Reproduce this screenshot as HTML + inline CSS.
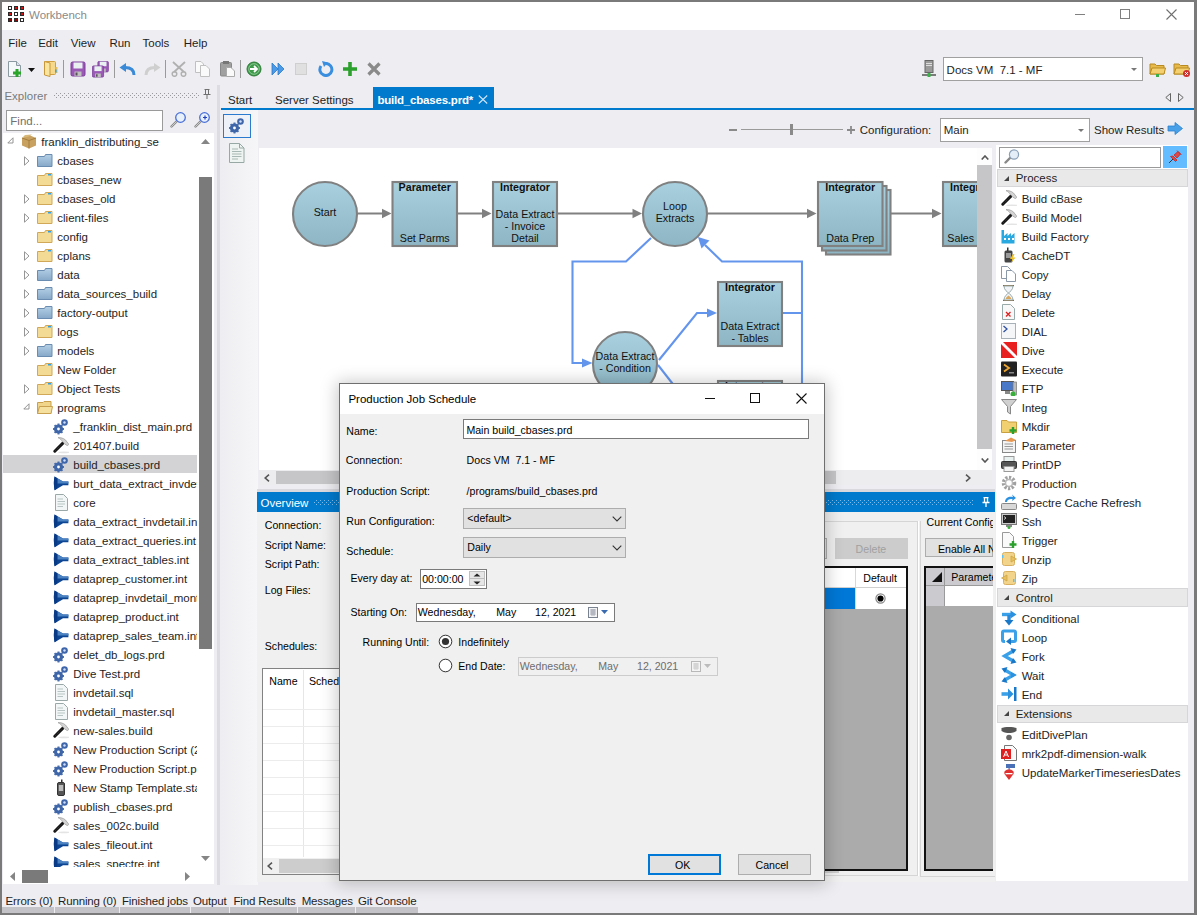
<!DOCTYPE html><html><head><meta charset="utf-8"><style>
html,body{margin:0;padding:0;}
body{width:1197px;height:915px;position:relative;overflow:hidden;background:#eeeef2;font-family:"Liberation Sans",sans-serif;}
.t{position:absolute;white-space:pre;}
.b{position:absolute;}
</style></head><body>
<div class="b" style="left:0px;top:0px;width:1197px;height:915px;background:#eeeef2"></div>
<div class="b" style="left:0px;top:0px;width:1197px;height:30px;background:#ffffff"></div>
<div class="b" style="left:8px;top:6px;width:4px;height:4px;background:#ffffff;box-sizing:border-box;border:1px solid #2a2a2a"></div>
<div class="b" style="left:14px;top:6px;width:4px;height:4px;background:#e01010;box-sizing:border-box;border:1px solid #2a2a2a"></div>
<div class="b" style="left:20px;top:6px;width:4px;height:4px;background:#e01010;box-sizing:border-box;border:1px solid #2a2a2a"></div>
<div class="b" style="left:8px;top:12px;width:4px;height:4px;background:#e01010;box-sizing:border-box;border:1px solid #2a2a2a"></div>
<div class="b" style="left:14px;top:12px;width:4px;height:4px;background:#ffffff;box-sizing:border-box;border:1px solid #2a2a2a"></div>
<div class="b" style="left:20px;top:12px;width:4px;height:4px;background:#e01010;box-sizing:border-box;border:1px solid #2a2a2a"></div>
<div class="b" style="left:8px;top:18px;width:4px;height:4px;background:#a00000;box-sizing:border-box;border:1px solid #2a2a2a"></div>
<div class="b" style="left:14px;top:18px;width:4px;height:4px;background:#a00000;box-sizing:border-box;border:1px solid #2a2a2a"></div>
<div class="b" style="left:20px;top:18px;width:4px;height:4px;background:#ffffff;box-sizing:border-box;border:1px solid #2a2a2a"></div>
<div class="t " style="left:29px;top:9.97px;font-size:11.5px;line-height:11.5px;color:#8a8a8a;font-weight:normal;">Workbench</div>
<div class="b" style="left:1075px;top:14px;width:10px;height:1px;background:#808080"></div>
<div class="b" style="left:1120px;top:9px;width:10px;height:10px;box-sizing:border-box;border:1px solid #808080"></div>
<svg class="b" style="left:1165.5px;top:9px;" width="11" height="11" viewBox="0 0 11 11"><path d="M0.5 0.5 L10.5 10.5 M10.5 0.5 L0.5 10.5" stroke="#707070" stroke-width="1.1"/></svg>
<div class="t " style="left:8.3px;top:38.17px;font-size:11.5px;line-height:11.5px;color:#1e1e1e;font-weight:normal;">File</div>
<div class="t " style="left:38.2px;top:38.17px;font-size:11.5px;line-height:11.5px;color:#1e1e1e;font-weight:normal;">Edit</div>
<div class="t " style="left:70.8px;top:38.17px;font-size:11.5px;line-height:11.5px;color:#1e1e1e;font-weight:normal;">View</div>
<div class="t " style="left:109.4px;top:38.17px;font-size:11.5px;line-height:11.5px;color:#1e1e1e;font-weight:normal;">Run</div>
<div class="t " style="left:142.5px;top:38.17px;font-size:11.5px;line-height:11.5px;color:#1e1e1e;font-weight:normal;">Tools</div>
<div class="t " style="left:183.8px;top:38.17px;font-size:11.5px;line-height:11.5px;color:#1e1e1e;font-weight:normal;">Help</div>
<svg class="b" style="left:7px;top:61px;" width="16" height="16" viewBox="0 0 16 16"><path d="M1.5 0.5 H9.5 L13.5 4.5 V15.5 H1.5 Z" fill="#f4f8f8" stroke="#8a9aa0"/><path d="M9.5 0.5 V4.5 H13.5" fill="#dde" stroke="#8a9aa0"/><path d="M10 8 V16 M6 12 H14" stroke="#2aa52a" stroke-width="3"/></svg>
<svg class="b" style="left:28px;top:68px;" width="7" height="4" viewBox="0 0 7 4"><path d="M0 0 H7 L3.5 4 Z" fill="#111"/></svg>
<svg class="b" style="left:43px;top:60px;" width="16" height="18" viewBox="0 0 16 18"><rect x="1.5" y="1.5" width="11" height="13" rx="1" fill="#f6d88c" stroke="#d0a040"/><path d="M1.5 1.5 L7 3 V16.5 L1.5 15Z" fill="#f9e4a0" stroke="#c89838"/><rect x="12.5" y="7" width="2" height="6" fill="#e8c060"/><rect x="12" y="9.5" width="1.6" height="3" fill="#30a8f0"/></svg>
<div class="b" style="left:63px;top:60px;width:1px;height:18px;background:#9a9a9a"></div>
<svg class="b" style="left:70px;top:61px;" width="16" height="16" viewBox="0 0 16 16"><g transform="translate(0.5,0.5) scale(1)"><rect x="0.5" y="0.5" width="14" height="14" rx="1.5" fill="#9b59b6" stroke="#7a3d9a"/><rect x="3" y="1" width="9" height="6" fill="#e8f0f0"/><rect x="4" y="10" width="7" height="4.5" fill="#c0c0c0"/><rect x="5" y="11" width="2" height="3" fill="#555"/></g></svg>
<svg class="b" style="left:92px;top:61px;" width="18" height="17" viewBox="0 0 18 17"><g transform="translate(5.5,0) scale(0.75)"><rect x="0.5" y="0.5" width="14" height="14" rx="1.5" fill="#9b59b6" stroke="#7a3d9a"/><rect x="3" y="1" width="9" height="6" fill="#e8f0f0"/><rect x="4" y="10" width="7" height="4.5" fill="#c0c0c0"/><rect x="5" y="11" width="2" height="3" fill="#555"/></g><g transform="translate(0,4.5) scale(0.8)"><rect x="0.5" y="0.5" width="14" height="14" rx="1.5" fill="#9b59b6" stroke="#7a3d9a"/><rect x="3" y="1" width="9" height="6" fill="#e8f0f0"/><rect x="4" y="10" width="7" height="4.5" fill="#c0c0c0"/><rect x="5" y="11" width="2" height="3" fill="#555"/></g></svg>
<div class="b" style="left:114px;top:60px;width:1px;height:18px;background:#9a9a9a"></div>
<svg class="b" style="left:119px;top:63px;" width="17" height="13" viewBox="0 0 17 13"><path d="M15 12 C15 6 11 4.5 6 4.5" fill="none" stroke="#3a8ad8" stroke-width="3"/><path d="M0.5 4.5 L7 0 V9 Z" fill="#3a8ad8"/></svg>
<svg class="b" style="left:144px;top:63px;" width="17" height="13" viewBox="0 0 17 13"><path d="M2 12 C2 6 6 4.5 11 4.5" fill="none" stroke="#cfcfcf" stroke-width="3"/><path d="M16.5 4.5 L10 0 V9 Z" fill="#cfcfcf"/></svg>
<div class="b" style="left:165px;top:60px;width:1px;height:18px;background:#9a9a9a"></div>
<svg class="b" style="left:171px;top:61px;" width="16" height="16" viewBox="0 0 16 16"><path d="M2 1 L13 11 M14 1 L3 11" stroke="#b0b0b0" stroke-width="1.8"/><circle cx="3.5" cy="13" r="2.3" fill="none" stroke="#b0b0b0" stroke-width="1.5"/><circle cx="12.5" cy="13" r="2.3" fill="none" stroke="#b0b0b0" stroke-width="1.5"/></svg>
<svg class="b" style="left:195px;top:61px;" width="16" height="16" viewBox="0 0 16 16"><path d="M0.5 0.5 H6 L8.5 3 V11.5 H0.5Z" fill="#fafafa" stroke="#c0c0c0"/><path d="M5.5 4.5 H11 L14.5 8 V15.5 H5.5Z" fill="#fafafa" stroke="#c0c0c0"/></svg>
<svg class="b" style="left:220px;top:61px;" width="16" height="16" viewBox="0 0 16 16"><rect x="0.5" y="1.5" width="11" height="13.5" rx="1" fill="#a0a0a0" stroke="#888"/><rect x="3" y="0" width="6" height="3" fill="#777"/><path d="M6.5 6.5 H11 L14.5 10 V15.5 H6.5Z" fill="#fafafa" stroke="#aaa"/></svg>
<div class="b" style="left:240px;top:60px;width:1px;height:18px;background:#9a9a9a"></div>
<svg class="b" style="left:246px;top:61px;" width="16" height="16" viewBox="0 0 16 16"><circle cx="8" cy="8" r="7" fill="#3d9b4a" stroke="#2d7a38"/><circle cx="8" cy="8" r="5.3" fill="none" stroke="#9fd0a5" stroke-width="0.8"/><path d="M4 8 H11 M8 5 L11 8 L8 11" fill="none" stroke="#fff" stroke-width="1.8"/></svg>
<svg class="b" style="left:271px;top:62px;" width="14" height="14" viewBox="0 0 14 14"><path d="M1 1 L7 7 L1 13 Z" fill="#4a9ae8" stroke="#2a78c8" stroke-width="0.8"/><path d="M7 1 L13 7 L7 13 Z" fill="#4a9ae8" stroke="#2a78c8" stroke-width="0.8"/></svg>
<svg class="b" style="left:295px;top:63px;" width="13" height="12" viewBox="0 0 13 12"><rect x="0.5" y="0.5" width="11" height="11" fill="#e0e0e0" stroke="#cfcfcf"/></svg>
<svg class="b" style="left:318px;top:61px;" width="16" height="16" viewBox="0 0 16 16"><path d="M8 2.5 A6 6 0 1 1 3 5" fill="none" stroke="#3a8ee0" stroke-width="3"/><path d="M4 0 L10 1.5 L6 6 Z" fill="#3a8ee0"/></svg>
<svg class="b" style="left:342px;top:61px;" width="16" height="16" viewBox="0 0 16 16"><path d="M8 1 V15 M1 8 H15" stroke="#2ca02c" stroke-width="3.6"/></svg>
<svg class="b" style="left:367px;top:62px;" width="14" height="14" viewBox="0 0 14 14"><path d="M1.5 1.5 L12.5 12.5 M12.5 1.5 L1.5 12.5" stroke="#8a8a8a" stroke-width="3.2"/></svg>
<svg class="b" style="left:921px;top:60px;" width="16" height="18" viewBox="0 0 16 18"><rect x="4" y="0.5" width="8" height="12" fill="#9a9a9a" stroke="#666"/><rect x="5" y="3" width="6" height="1" fill="#ddd"/><rect x="5" y="5" width="6" height="1" fill="#ddd"/><path d="M1 15 H15" stroke="#555" stroke-width="1.5"/><rect x="6.5" y="13" width="3" height="4" fill="#3ab04a"/></svg>
<div class="b" style="left:943px;top:57px;width:200px;height:24px;background:#fff;box-sizing:border-box;border:1px solid #a0a0a0"></div>
<div class="t " style="left:946.6px;top:64.77px;font-size:11.5px;line-height:11.5px;color:#1e1e1e;font-weight:normal;">Docs VM  7.1 - MF</div>
<svg class="b" style="left:1131px;top:68px;" width="6" height="3" viewBox="0 0 6 3"><path d="M0 0 H6 L3 3Z" fill="#777"/></svg>
<svg class="b" style="left:1149px;top:61px;" width="17" height="16" viewBox="0 0 17 16"><path d="M1 3 H6 L7.5 4.5 H15 V13 H1Z" fill="#e6b94a" stroke="#b88a20"/><path d="M1 13 L3 7 H16.5 L15 13Z" fill="#f5d070" stroke="#b88a20"/><rect x="7" y="13" width="3" height="3" fill="#3ab04a"/></svg>
<svg class="b" style="left:1173px;top:61px;" width="18" height="16" viewBox="0 0 18 16"><path d="M1 3 H6 L7.5 4.5 H15 V13 H1Z" fill="#e6b94a" stroke="#b88a20"/><path d="M1 13 L3 7 H16.5 L15 13Z" fill="#f5d070" stroke="#b88a20"/><circle cx="13.5" cy="12.5" r="3.5" fill="#d03030"/><path d="M12 11 L15 14 M15 11 L12 14" stroke="#fff" stroke-width="1"/></svg>
<div class="t " style="left:4.4px;top:90.97px;font-size:11.5px;line-height:11.5px;color:#7a7a7a;font-weight:normal;">Explorer</div>
<svg class="b" style="left:54px;top:93px;" width="146" height="5" viewBox="0 0 146 5"><defs><pattern id="pd1" x="0" y="0" width="4" height="4" patternUnits="userSpaceOnUse"><rect x="2" y="0" width="1" height="1" fill="#9a9a9e"/><rect x="0" y="2" width="1" height="1" fill="#9a9a9e"/></pattern></defs><rect x="0" y="0" width="146" height="5" fill="url(#pd1)"/></svg>
<svg class="b" style="left:203px;top:89px;" width="8" height="10" viewBox="0 0 8 10"><path d="M1.5 0.5 H6.5 M2.5 0.5 V5.5 H5.5 V0.5 M0.5 5.5 H7.5 M4 5.5 V10" fill="none" stroke="#707070"/></svg>
<div class="b" style="left:6px;top:110px;width:157px;height:21px;background:#fff;box-sizing:border-box;border:1px solid #9a9a9a"></div>
<div class="t " style="left:10.3px;top:115.67px;font-size:11.5px;line-height:11.5px;color:#707070;font-weight:normal;">Find...</div>
<svg class="b" style="left:170px;top:112px;" width="16" height="16" viewBox="0 0 16 16"><path d="M6.5 9.5 L1.5 14.5" stroke="#888" stroke-width="2.4" stroke-linecap="round"/><path d="M6.5 9.5 L1.5 14.5" stroke="#ddd" stroke-width="0.8" stroke-linecap="round"/><circle cx="10.5" cy="5.5" r="4.8" fill="#e8f0fa" stroke="#4a70d8" stroke-width="1.3"/></svg>
<svg class="b" style="left:194px;top:112px;" width="16" height="16" viewBox="0 0 16 16"><path d="M6.5 9.5 L1.5 14.5" stroke="#888" stroke-width="2.4" stroke-linecap="round"/><path d="M6.5 9.5 L1.5 14.5" stroke="#ddd" stroke-width="0.8" stroke-linecap="round"/><circle cx="10.5" cy="5.5" r="4.8" fill="#e8f0fa" stroke="#4a70d8" stroke-width="1.3"/><path d="M9 5.5 H13 M11 3.5 V7.5" stroke="#2040c0" stroke-width="1.2"/></svg>
<div class="b" style="left:3px;top:133px;width:211px;height:751px;background:#ffffff"></div>
<div class="b" style="left:214px;top:85px;width:3px;height:800px;background:#eeeef2"></div>
<div class="b" style="left:217px;top:85px;width:3px;height:800px;background:#dcdce2"></div>
<div class="b" style="left:3px;top:455px;width:194px;height:18px;background:#d3d3d6"></div>
<div class="b" style="left:0;top:0;width:1197px;height:915px;clip-path:inset(133px 1000px 48px 3px)">
<svg class="b" style="left:7px;top:136.5px;" width="7" height="7" viewBox="0 0 7 7"><path d="M6 0.8 V6 H0.8 Z" fill="none" stroke="#8a8a8a" stroke-width="0.9"/></svg>
<svg class="b" style="left:21px;top:133.5px;" width="16" height="15" viewBox="0 0 16 15"><path d="M1 4 L8 1 L15 4 V11.5 L8 14.5 L1 11.5Z" fill="#c8a060"/><path d="M1 4 L8 6.5 L15 4 M8 6.5 V14.5" fill="none" stroke="#a07838" stroke-width="0.9"/><path d="M1 4 L4 1 L11 0.5 L8 2.5" fill="#d8b878"/></svg>
<div class="t " style="left:41.3px;top:137.17px;font-size:11.5px;line-height:11.5px;color:#1e1e1e;font-weight:normal;">franklin_distributing_se</div>
<svg class="b" style="left:24px;top:155.5px;" width="6" height="10" viewBox="0 0 6 10"><path d="M0.5 0.8 L5 5 L0.5 9.2 Z" fill="none" stroke="#8a8a8a" stroke-width="0.9"/></svg>
<svg class="b" style="left:37px;top:153.5px;" width="16" height="14" viewBox="0 0 16 14"><defs><linearGradient id="gb" x1="0" y1="0" x2="0" y2="1"><stop offset="0" stop-color="#b4d0e6"/><stop offset="1" stop-color="#86a8c8"/></linearGradient></defs><path d="M0.5 2.5 H7.5 L8.5 0.5 H15 V12.5 H0.5Z" fill="url(#gb)" stroke="#6a8cb0"/></svg>
<div class="t " style="left:57.3px;top:156.17px;font-size:11.5px;line-height:11.5px;color:#1e1e1e;font-weight:normal;">cbases</div>
<svg class="b" style="left:37px;top:172.5px;" width="16" height="14" viewBox="0 0 16 14"><path d="M0.5 2.5 H7.5 L8.5 0.5 H15 V12.5 H0.5Z" fill="#f3da95" stroke="#d0a858"/><rect x="11" y="1" width="3" height="1.5" fill="#30a0e8"/></svg>
<div class="t " style="left:57.3px;top:175.17px;font-size:11.5px;line-height:11.5px;color:#1e1e1e;font-weight:normal;">cbases_new</div>
<svg class="b" style="left:24px;top:193.5px;" width="6" height="10" viewBox="0 0 6 10"><path d="M0.5 0.8 L5 5 L0.5 9.2 Z" fill="none" stroke="#8a8a8a" stroke-width="0.9"/></svg>
<svg class="b" style="left:37px;top:191.5px;" width="16" height="14" viewBox="0 0 16 14"><path d="M0.5 2.5 H7.5 L8.5 0.5 H15 V12.5 H0.5Z" fill="#f3da95" stroke="#d0a858"/><rect x="11" y="1" width="3" height="1.5" fill="#30a0e8"/></svg>
<div class="t " style="left:57.3px;top:194.17px;font-size:11.5px;line-height:11.5px;color:#1e1e1e;font-weight:normal;">cbases_old</div>
<svg class="b" style="left:24px;top:212.5px;" width="6" height="10" viewBox="0 0 6 10"><path d="M0.5 0.8 L5 5 L0.5 9.2 Z" fill="none" stroke="#8a8a8a" stroke-width="0.9"/></svg>
<svg class="b" style="left:37px;top:210.5px;" width="16" height="14" viewBox="0 0 16 14"><path d="M0.5 2.5 H7.5 L8.5 0.5 H15 V12.5 H0.5Z" fill="#f3da95" stroke="#d0a858"/><rect x="11" y="1" width="3" height="1.5" fill="#30a0e8"/></svg>
<div class="t " style="left:57.3px;top:213.17px;font-size:11.5px;line-height:11.5px;color:#1e1e1e;font-weight:normal;">client-files</div>
<svg class="b" style="left:37px;top:229.5px;" width="16" height="14" viewBox="0 0 16 14"><path d="M0.5 2.5 H7.5 L8.5 0.5 H15 V12.5 H0.5Z" fill="#f3da95" stroke="#d0a858"/><rect x="11" y="1" width="3" height="1.5" fill="#30a0e8"/></svg>
<div class="t " style="left:57.3px;top:232.17px;font-size:11.5px;line-height:11.5px;color:#1e1e1e;font-weight:normal;">config</div>
<svg class="b" style="left:24px;top:250.5px;" width="6" height="10" viewBox="0 0 6 10"><path d="M0.5 0.8 L5 5 L0.5 9.2 Z" fill="none" stroke="#8a8a8a" stroke-width="0.9"/></svg>
<svg class="b" style="left:37px;top:248.5px;" width="16" height="14" viewBox="0 0 16 14"><path d="M0.5 2.5 H7.5 L8.5 0.5 H15 V12.5 H0.5Z" fill="#f3da95" stroke="#d0a858"/><rect x="11" y="1" width="3" height="1.5" fill="#30a0e8"/></svg>
<div class="t " style="left:57.3px;top:251.17px;font-size:11.5px;line-height:11.5px;color:#1e1e1e;font-weight:normal;">cplans</div>
<svg class="b" style="left:24px;top:269.5px;" width="6" height="10" viewBox="0 0 6 10"><path d="M0.5 0.8 L5 5 L0.5 9.2 Z" fill="none" stroke="#8a8a8a" stroke-width="0.9"/></svg>
<svg class="b" style="left:37px;top:267.5px;" width="16" height="14" viewBox="0 0 16 14"><defs><linearGradient id="gb" x1="0" y1="0" x2="0" y2="1"><stop offset="0" stop-color="#b4d0e6"/><stop offset="1" stop-color="#86a8c8"/></linearGradient></defs><path d="M0.5 2.5 H7.5 L8.5 0.5 H15 V12.5 H0.5Z" fill="url(#gb)" stroke="#6a8cb0"/></svg>
<div class="t " style="left:57.3px;top:270.17px;font-size:11.5px;line-height:11.5px;color:#1e1e1e;font-weight:normal;">data</div>
<svg class="b" style="left:24px;top:288.5px;" width="6" height="10" viewBox="0 0 6 10"><path d="M0.5 0.8 L5 5 L0.5 9.2 Z" fill="none" stroke="#8a8a8a" stroke-width="0.9"/></svg>
<svg class="b" style="left:37px;top:286.5px;" width="16" height="14" viewBox="0 0 16 14"><defs><linearGradient id="gb" x1="0" y1="0" x2="0" y2="1"><stop offset="0" stop-color="#b4d0e6"/><stop offset="1" stop-color="#86a8c8"/></linearGradient></defs><path d="M0.5 2.5 H7.5 L8.5 0.5 H15 V12.5 H0.5Z" fill="url(#gb)" stroke="#6a8cb0"/></svg>
<div class="t " style="left:57.3px;top:289.17px;font-size:11.5px;line-height:11.5px;color:#1e1e1e;font-weight:normal;">data_sources_build</div>
<svg class="b" style="left:24px;top:307.5px;" width="6" height="10" viewBox="0 0 6 10"><path d="M0.5 0.8 L5 5 L0.5 9.2 Z" fill="none" stroke="#8a8a8a" stroke-width="0.9"/></svg>
<svg class="b" style="left:37px;top:305.5px;" width="16" height="14" viewBox="0 0 16 14"><defs><linearGradient id="gb" x1="0" y1="0" x2="0" y2="1"><stop offset="0" stop-color="#b4d0e6"/><stop offset="1" stop-color="#86a8c8"/></linearGradient></defs><path d="M0.5 2.5 H7.5 L8.5 0.5 H15 V12.5 H0.5Z" fill="url(#gb)" stroke="#6a8cb0"/></svg>
<div class="t " style="left:57.3px;top:308.17px;font-size:11.5px;line-height:11.5px;color:#1e1e1e;font-weight:normal;">factory-output</div>
<svg class="b" style="left:24px;top:326.5px;" width="6" height="10" viewBox="0 0 6 10"><path d="M0.5 0.8 L5 5 L0.5 9.2 Z" fill="none" stroke="#8a8a8a" stroke-width="0.9"/></svg>
<svg class="b" style="left:37px;top:324.5px;" width="16" height="14" viewBox="0 0 16 14"><path d="M0.5 2.5 H7.5 L8.5 0.5 H15 V12.5 H0.5Z" fill="#f3da95" stroke="#d0a858"/><rect x="11" y="1" width="3" height="1.5" fill="#30a0e8"/></svg>
<div class="t " style="left:57.3px;top:327.17px;font-size:11.5px;line-height:11.5px;color:#1e1e1e;font-weight:normal;">logs</div>
<svg class="b" style="left:24px;top:345.5px;" width="6" height="10" viewBox="0 0 6 10"><path d="M0.5 0.8 L5 5 L0.5 9.2 Z" fill="none" stroke="#8a8a8a" stroke-width="0.9"/></svg>
<svg class="b" style="left:37px;top:343.5px;" width="16" height="14" viewBox="0 0 16 14"><defs><linearGradient id="gb" x1="0" y1="0" x2="0" y2="1"><stop offset="0" stop-color="#b4d0e6"/><stop offset="1" stop-color="#86a8c8"/></linearGradient></defs><path d="M0.5 2.5 H7.5 L8.5 0.5 H15 V12.5 H0.5Z" fill="url(#gb)" stroke="#6a8cb0"/></svg>
<div class="t " style="left:57.3px;top:346.17px;font-size:11.5px;line-height:11.5px;color:#1e1e1e;font-weight:normal;">models</div>
<svg class="b" style="left:37px;top:362.5px;" width="16" height="14" viewBox="0 0 16 14"><path d="M0.5 2.5 H7.5 L8.5 0.5 H15 V12.5 H0.5Z" fill="#f3da95" stroke="#d0a858"/><rect x="11" y="1" width="3" height="1.5" fill="#30a0e8"/></svg>
<div class="t " style="left:57.3px;top:365.17px;font-size:11.5px;line-height:11.5px;color:#1e1e1e;font-weight:normal;">New Folder</div>
<svg class="b" style="left:24px;top:383.5px;" width="6" height="10" viewBox="0 0 6 10"><path d="M0.5 0.8 L5 5 L0.5 9.2 Z" fill="none" stroke="#8a8a8a" stroke-width="0.9"/></svg>
<svg class="b" style="left:37px;top:381.5px;" width="16" height="14" viewBox="0 0 16 14"><path d="M0.5 2.5 H7.5 L8.5 0.5 H15 V12.5 H0.5Z" fill="#f3da95" stroke="#d0a858"/><rect x="11" y="1" width="3" height="1.5" fill="#30a0e8"/></svg>
<div class="t " style="left:57.3px;top:384.17px;font-size:11.5px;line-height:11.5px;color:#1e1e1e;font-weight:normal;">Object Tests</div>
<svg class="b" style="left:23px;top:402.5px;" width="7" height="7" viewBox="0 0 7 7"><path d="M6 0.8 V6 H0.8 Z" fill="none" stroke="#8a8a8a" stroke-width="0.9"/></svg>
<svg class="b" style="left:37px;top:400.5px;" width="16" height="14" viewBox="0 0 16 14"><path d="M0.5 1.5 H6 L7 0.5 H14 V12.5 H0.5Z" fill="#f0d58a" stroke="#c8a050"/><path d="M0.5 12.5 L2.5 5.5 H15.5 L14 12.5Z" fill="#f6e0a0" stroke="#c8a050"/></svg>
<div class="t " style="left:57.3px;top:403.17px;font-size:11.5px;line-height:11.5px;color:#1e1e1e;font-weight:normal;">programs</div>
<svg class="b" style="left:53px;top:417.5px;" width="16" height="17" viewBox="0 0 16 17"><g fill="#3f66a8"><circle cx="5.5" cy="11" r="4.6"/><circle cx="11.5" cy="4.5" r="3.3"/></g><g fill="#5d82c0" opacity="0.9"><path d="M5.5 5.5 V16.5 M0 11 H11 M1.6 7.1 L9.4 14.9 M9.4 7.1 L1.6 14.9" stroke="#3f66a8" stroke-width="2"/></g><circle cx="5.5" cy="11" r="1.4" fill="#fff"/><circle cx="11.5" cy="4.5" r="1.2" fill="#cfe0ff"/></svg>
<div class="t " style="left:73.3px;top:422.17px;font-size:11.5px;line-height:11.5px;color:#1e1e1e;font-weight:normal;">_franklin_dist_main.prd</div>
<svg class="b" style="left:53px;top:436.5px;" width="16" height="17" viewBox="0 0 16 17"><ellipse cx="11" cy="15.3" rx="6" ry="0.9" fill="#e4e4e4"/><path d="M5 0.6 C9 0.4 12.5 2 14 5 L15.3 6.6 C16.2 7.6 14.6 9.2 13.6 8.2 L11.2 6.6 L9.8 8 L8 6.5 L9.6 5 C8.6 3 7 1.5 5 0.6Z" fill="#d4d4d4" stroke="#9a9a9a" stroke-width="0.7"/><path d="M1.8 14.2 L9.4 6.6" stroke="#151515" stroke-width="2.9" stroke-linecap="round"/><path d="M2.5 13.5 L8.5 7.5" stroke="#666" stroke-width="0.6" stroke-dasharray="0.8 1.2"/></svg>
<div class="t " style="left:73.3px;top:441.17px;font-size:11.5px;line-height:11.5px;color:#1e1e1e;font-weight:normal;">201407.build</div>
<svg class="b" style="left:53px;top:455.5px;" width="16" height="17" viewBox="0 0 16 17"><g fill="#3f66a8"><circle cx="5.5" cy="11" r="4.6"/><circle cx="11.5" cy="4.5" r="3.3"/></g><g fill="#5d82c0" opacity="0.9"><path d="M5.5 5.5 V16.5 M0 11 H11 M1.6 7.1 L9.4 14.9 M9.4 7.1 L1.6 14.9" stroke="#3f66a8" stroke-width="2"/></g><circle cx="5.5" cy="11" r="1.4" fill="#fff"/><circle cx="11.5" cy="4.5" r="1.2" fill="#cfe0ff"/></svg>
<div class="t " style="left:73.3px;top:460.17px;font-size:11.5px;line-height:11.5px;color:#1e1e1e;font-weight:normal;">build_cbases.prd</div>
<svg class="b" style="left:53px;top:475.5px;" width="16" height="15" viewBox="0 0 16 15"><path d="M1.6 0.6 C0.6 4 0.6 10 1.6 14.2 L10 9.2 H15.4 V5.4 H10 Z" fill="#0d4595"/><path d="M4.5 2.6 L10 5.4 H15.4 V7.6 H4.5Z" fill="#4a82c2"/><path d="M1.6 0.6 C0.6 4 0.6 10 1.6 14.2 L4.2 12.6 V2.2Z" fill="#083a85"/></svg>
<div class="t " style="left:73.3px;top:479.17px;font-size:11.5px;line-height:11.5px;color:#1e1e1e;font-weight:normal;">burt_data_extract_invdetail.int</div>
<svg class="b" style="left:55px;top:493.5px;" width="13" height="17" viewBox="0 0 13 17"><path d="M0.5 0.5 H8.5 L12.5 4.5 V16.5 H0.5Z" fill="#f2f6f6" stroke="#9aa8a8"/><path d="M2.5 5 H8 M2.5 7.5 H10 M2.5 10 H10 M2.5 12.5 H8" stroke="#b8c4c4" stroke-width="1"/></svg>
<div class="t " style="left:73.3px;top:498.17px;font-size:11.5px;line-height:11.5px;color:#1e1e1e;font-weight:normal;">core</div>
<svg class="b" style="left:53px;top:513.5px;" width="16" height="15" viewBox="0 0 16 15"><path d="M1.6 0.6 C0.6 4 0.6 10 1.6 14.2 L10 9.2 H15.4 V5.4 H10 Z" fill="#0d4595"/><path d="M4.5 2.6 L10 5.4 H15.4 V7.6 H4.5Z" fill="#4a82c2"/><path d="M1.6 0.6 C0.6 4 0.6 10 1.6 14.2 L4.2 12.6 V2.2Z" fill="#083a85"/></svg>
<div class="t " style="left:73.3px;top:517.17px;font-size:11.5px;line-height:11.5px;color:#1e1e1e;font-weight:normal;">data_extract_invdetail.int</div>
<svg class="b" style="left:53px;top:532.5px;" width="16" height="15" viewBox="0 0 16 15"><path d="M1.6 0.6 C0.6 4 0.6 10 1.6 14.2 L10 9.2 H15.4 V5.4 H10 Z" fill="#0d4595"/><path d="M4.5 2.6 L10 5.4 H15.4 V7.6 H4.5Z" fill="#4a82c2"/><path d="M1.6 0.6 C0.6 4 0.6 10 1.6 14.2 L4.2 12.6 V2.2Z" fill="#083a85"/></svg>
<div class="t " style="left:73.3px;top:536.17px;font-size:11.5px;line-height:11.5px;color:#1e1e1e;font-weight:normal;">data_extract_queries.int</div>
<svg class="b" style="left:53px;top:551.5px;" width="16" height="15" viewBox="0 0 16 15"><path d="M1.6 0.6 C0.6 4 0.6 10 1.6 14.2 L10 9.2 H15.4 V5.4 H10 Z" fill="#0d4595"/><path d="M4.5 2.6 L10 5.4 H15.4 V7.6 H4.5Z" fill="#4a82c2"/><path d="M1.6 0.6 C0.6 4 0.6 10 1.6 14.2 L4.2 12.6 V2.2Z" fill="#083a85"/></svg>
<div class="t " style="left:73.3px;top:555.17px;font-size:11.5px;line-height:11.5px;color:#1e1e1e;font-weight:normal;">data_extract_tables.int</div>
<svg class="b" style="left:53px;top:570.5px;" width="16" height="15" viewBox="0 0 16 15"><path d="M1.6 0.6 C0.6 4 0.6 10 1.6 14.2 L10 9.2 H15.4 V5.4 H10 Z" fill="#0d4595"/><path d="M4.5 2.6 L10 5.4 H15.4 V7.6 H4.5Z" fill="#4a82c2"/><path d="M1.6 0.6 C0.6 4 0.6 10 1.6 14.2 L4.2 12.6 V2.2Z" fill="#083a85"/></svg>
<div class="t " style="left:73.3px;top:574.17px;font-size:11.5px;line-height:11.5px;color:#1e1e1e;font-weight:normal;">dataprep_customer.int</div>
<svg class="b" style="left:53px;top:589.5px;" width="16" height="15" viewBox="0 0 16 15"><path d="M1.6 0.6 C0.6 4 0.6 10 1.6 14.2 L10 9.2 H15.4 V5.4 H10 Z" fill="#0d4595"/><path d="M4.5 2.6 L10 5.4 H15.4 V7.6 H4.5Z" fill="#4a82c2"/><path d="M1.6 0.6 C0.6 4 0.6 10 1.6 14.2 L4.2 12.6 V2.2Z" fill="#083a85"/></svg>
<div class="t " style="left:73.3px;top:593.17px;font-size:11.5px;line-height:11.5px;color:#1e1e1e;font-weight:normal;">dataprep_invdetail_month.int</div>
<svg class="b" style="left:53px;top:608.5px;" width="16" height="15" viewBox="0 0 16 15"><path d="M1.6 0.6 C0.6 4 0.6 10 1.6 14.2 L10 9.2 H15.4 V5.4 H10 Z" fill="#0d4595"/><path d="M4.5 2.6 L10 5.4 H15.4 V7.6 H4.5Z" fill="#4a82c2"/><path d="M1.6 0.6 C0.6 4 0.6 10 1.6 14.2 L4.2 12.6 V2.2Z" fill="#083a85"/></svg>
<div class="t " style="left:73.3px;top:612.17px;font-size:11.5px;line-height:11.5px;color:#1e1e1e;font-weight:normal;">dataprep_product.int</div>
<svg class="b" style="left:53px;top:627.5px;" width="16" height="15" viewBox="0 0 16 15"><path d="M1.6 0.6 C0.6 4 0.6 10 1.6 14.2 L10 9.2 H15.4 V5.4 H10 Z" fill="#0d4595"/><path d="M4.5 2.6 L10 5.4 H15.4 V7.6 H4.5Z" fill="#4a82c2"/><path d="M1.6 0.6 C0.6 4 0.6 10 1.6 14.2 L4.2 12.6 V2.2Z" fill="#083a85"/></svg>
<div class="t " style="left:73.3px;top:631.17px;font-size:11.5px;line-height:11.5px;color:#1e1e1e;font-weight:normal;">dataprep_sales_team.int</div>
<svg class="b" style="left:53px;top:645.5px;" width="16" height="17" viewBox="0 0 16 17"><g fill="#3f66a8"><circle cx="5.5" cy="11" r="4.6"/><circle cx="11.5" cy="4.5" r="3.3"/></g><g fill="#5d82c0" opacity="0.9"><path d="M5.5 5.5 V16.5 M0 11 H11 M1.6 7.1 L9.4 14.9 M9.4 7.1 L1.6 14.9" stroke="#3f66a8" stroke-width="2"/></g><circle cx="5.5" cy="11" r="1.4" fill="#fff"/><circle cx="11.5" cy="4.5" r="1.2" fill="#cfe0ff"/></svg>
<div class="t " style="left:73.3px;top:650.17px;font-size:11.5px;line-height:11.5px;color:#1e1e1e;font-weight:normal;">delet_db_logs.prd</div>
<svg class="b" style="left:53px;top:664.5px;" width="16" height="17" viewBox="0 0 16 17"><g fill="#3f66a8"><circle cx="5.5" cy="11" r="4.6"/><circle cx="11.5" cy="4.5" r="3.3"/></g><g fill="#5d82c0" opacity="0.9"><path d="M5.5 5.5 V16.5 M0 11 H11 M1.6 7.1 L9.4 14.9 M9.4 7.1 L1.6 14.9" stroke="#3f66a8" stroke-width="2"/></g><circle cx="5.5" cy="11" r="1.4" fill="#fff"/><circle cx="11.5" cy="4.5" r="1.2" fill="#cfe0ff"/></svg>
<div class="t " style="left:73.3px;top:669.17px;font-size:11.5px;line-height:11.5px;color:#1e1e1e;font-weight:normal;">Dive Test.prd</div>
<svg class="b" style="left:55px;top:683.5px;" width="13" height="17" viewBox="0 0 13 17"><path d="M0.5 0.5 H8.5 L12.5 4.5 V16.5 H0.5Z" fill="#f2f6f6" stroke="#9aa8a8"/><path d="M2.5 5 H8 M2.5 7.5 H10 M2.5 10 H10 M2.5 12.5 H8" stroke="#b8c4c4" stroke-width="1"/></svg>
<div class="t " style="left:73.3px;top:688.17px;font-size:11.5px;line-height:11.5px;color:#1e1e1e;font-weight:normal;">invdetail.sql</div>
<svg class="b" style="left:55px;top:702.5px;" width="13" height="17" viewBox="0 0 13 17"><path d="M0.5 0.5 H8.5 L12.5 4.5 V16.5 H0.5Z" fill="#f2f6f6" stroke="#9aa8a8"/><path d="M2.5 5 H8 M2.5 7.5 H10 M2.5 10 H10 M2.5 12.5 H8" stroke="#b8c4c4" stroke-width="1"/></svg>
<div class="t " style="left:73.3px;top:707.17px;font-size:11.5px;line-height:11.5px;color:#1e1e1e;font-weight:normal;">invdetail_master.sql</div>
<svg class="b" style="left:53px;top:721.5px;" width="16" height="17" viewBox="0 0 16 17"><ellipse cx="11" cy="15.3" rx="6" ry="0.9" fill="#e4e4e4"/><path d="M5 0.6 C9 0.4 12.5 2 14 5 L15.3 6.6 C16.2 7.6 14.6 9.2 13.6 8.2 L11.2 6.6 L9.8 8 L8 6.5 L9.6 5 C8.6 3 7 1.5 5 0.6Z" fill="#d4d4d4" stroke="#9a9a9a" stroke-width="0.7"/><path d="M1.8 14.2 L9.4 6.6" stroke="#151515" stroke-width="2.9" stroke-linecap="round"/><path d="M2.5 13.5 L8.5 7.5" stroke="#666" stroke-width="0.6" stroke-dasharray="0.8 1.2"/></svg>
<div class="t " style="left:73.3px;top:726.17px;font-size:11.5px;line-height:11.5px;color:#1e1e1e;font-weight:normal;">new-sales.build</div>
<svg class="b" style="left:53px;top:740.5px;" width="16" height="17" viewBox="0 0 16 17"><g fill="#3f66a8"><circle cx="5.5" cy="11" r="4.6"/><circle cx="11.5" cy="4.5" r="3.3"/></g><g fill="#5d82c0" opacity="0.9"><path d="M5.5 5.5 V16.5 M0 11 H11 M1.6 7.1 L9.4 14.9 M9.4 7.1 L1.6 14.9" stroke="#3f66a8" stroke-width="2"/></g><circle cx="5.5" cy="11" r="1.4" fill="#fff"/><circle cx="11.5" cy="4.5" r="1.2" fill="#cfe0ff"/></svg>
<div class="t " style="left:73.3px;top:745.17px;font-size:11.5px;line-height:11.5px;color:#1e1e1e;font-weight:normal;">New Production Script (2).prd</div>
<svg class="b" style="left:53px;top:759.5px;" width="16" height="17" viewBox="0 0 16 17"><g fill="#3f66a8"><circle cx="5.5" cy="11" r="4.6"/><circle cx="11.5" cy="4.5" r="3.3"/></g><g fill="#5d82c0" opacity="0.9"><path d="M5.5 5.5 V16.5 M0 11 H11 M1.6 7.1 L9.4 14.9 M9.4 7.1 L1.6 14.9" stroke="#3f66a8" stroke-width="2"/></g><circle cx="5.5" cy="11" r="1.4" fill="#fff"/><circle cx="11.5" cy="4.5" r="1.2" fill="#cfe0ff"/></svg>
<div class="t " style="left:73.3px;top:764.17px;font-size:11.5px;line-height:11.5px;color:#1e1e1e;font-weight:normal;">New Production Script.prd</div>
<svg class="b" style="left:55px;top:778.5px;" width="12" height="18" viewBox="0 0 12 18"><rect x="2.5" y="3.5" width="7" height="13" rx="1.5" fill="#555" stroke="#333"/><rect x="3.8" y="6" width="4.4" height="6" fill="#bbb"/><rect x="6" y="0.5" width="1.5" height="3.5" fill="#333"/></svg>
<div class="t " style="left:73.3px;top:783.17px;font-size:11.5px;line-height:11.5px;color:#1e1e1e;font-weight:normal;">New Stamp Template.stamp</div>
<svg class="b" style="left:53px;top:797.5px;" width="16" height="17" viewBox="0 0 16 17"><g fill="#3f66a8"><circle cx="5.5" cy="11" r="4.6"/><circle cx="11.5" cy="4.5" r="3.3"/></g><g fill="#5d82c0" opacity="0.9"><path d="M5.5 5.5 V16.5 M0 11 H11 M1.6 7.1 L9.4 14.9 M9.4 7.1 L1.6 14.9" stroke="#3f66a8" stroke-width="2"/></g><circle cx="5.5" cy="11" r="1.4" fill="#fff"/><circle cx="11.5" cy="4.5" r="1.2" fill="#cfe0ff"/></svg>
<div class="t " style="left:73.3px;top:802.17px;font-size:11.5px;line-height:11.5px;color:#1e1e1e;font-weight:normal;">publish_cbases.prd</div>
<svg class="b" style="left:53px;top:816.5px;" width="16" height="17" viewBox="0 0 16 17"><ellipse cx="11" cy="15.3" rx="6" ry="0.9" fill="#e4e4e4"/><path d="M5 0.6 C9 0.4 12.5 2 14 5 L15.3 6.6 C16.2 7.6 14.6 9.2 13.6 8.2 L11.2 6.6 L9.8 8 L8 6.5 L9.6 5 C8.6 3 7 1.5 5 0.6Z" fill="#d4d4d4" stroke="#9a9a9a" stroke-width="0.7"/><path d="M1.8 14.2 L9.4 6.6" stroke="#151515" stroke-width="2.9" stroke-linecap="round"/><path d="M2.5 13.5 L8.5 7.5" stroke="#666" stroke-width="0.6" stroke-dasharray="0.8 1.2"/></svg>
<div class="t " style="left:73.3px;top:821.17px;font-size:11.5px;line-height:11.5px;color:#1e1e1e;font-weight:normal;">sales_002c.build</div>
<svg class="b" style="left:53px;top:836.5px;" width="16" height="15" viewBox="0 0 16 15"><path d="M1.6 0.6 C0.6 4 0.6 10 1.6 14.2 L10 9.2 H15.4 V5.4 H10 Z" fill="#0d4595"/><path d="M4.5 2.6 L10 5.4 H15.4 V7.6 H4.5Z" fill="#4a82c2"/><path d="M1.6 0.6 C0.6 4 0.6 10 1.6 14.2 L4.2 12.6 V2.2Z" fill="#083a85"/></svg>
<div class="t " style="left:73.3px;top:840.17px;font-size:11.5px;line-height:11.5px;color:#1e1e1e;font-weight:normal;">sales_fileout.int</div>
<svg class="b" style="left:53px;top:855.5px;" width="16" height="15" viewBox="0 0 16 15"><path d="M1.6 0.6 C0.6 4 0.6 10 1.6 14.2 L10 9.2 H15.4 V5.4 H10 Z" fill="#0d4595"/><path d="M4.5 2.6 L10 5.4 H15.4 V7.6 H4.5Z" fill="#4a82c2"/><path d="M1.6 0.6 C0.6 4 0.6 10 1.6 14.2 L4.2 12.6 V2.2Z" fill="#083a85"/></svg>
<div class="t " style="left:73.3px;top:859.17px;font-size:11.5px;line-height:11.5px;color:#1e1e1e;font-weight:normal;">sales_spectre.int</div>
</div>
<div class="b" style="left:199px;top:133px;width:15px;height:734px;background:#ffffff"></div>
<svg class="b" style="left:201px;top:139px;" width="9" height="5" viewBox="0 0 9 5"><path d="M0 5 L4.5 0 L9 5Z" fill="#858585"/></svg>
<div class="b" style="left:199px;top:177px;width:13px;height:472px;background:#7a7a7a"></div>
<svg class="b" style="left:201px;top:856px;" width="9" height="5" viewBox="0 0 9 5"><path d="M0 0 L4.5 5 L9 0Z" fill="#858585"/></svg>
<div class="b" style="left:3px;top:867px;width:211px;height:17px;background:#ffffff"></div>
<svg class="b" style="left:10px;top:872px;" width="5" height="9" viewBox="0 0 5 9"><path d="M5 0 L0 4.5 L5 9Z" fill="#858585"/></svg>
<div class="b" style="left:22px;top:870px;width:26px;height:13px;background:#7a7a7a"></div>
<svg class="b" style="left:185px;top:872px;" width="5" height="9" viewBox="0 0 5 9"><path d="M0 0 L5 4.5 L0 9Z" fill="#858585"/></svg>
<div class="t " style="left:228px;top:95.27px;font-size:11.5px;line-height:11.5px;color:#1e1e1e;font-weight:normal;">Start</div>
<div class="t " style="left:275px;top:95.27px;font-size:11.5px;line-height:11.5px;color:#1e1e1e;font-weight:normal;">Server Settings</div>
<div class="b" style="left:373px;top:87px;width:121px;height:21px;background:#007acc"></div>
<div class="t " style="left:377.4px;top:95.27px;font-size:11.5px;line-height:11.5px;color:#ffffff;font-weight:bold;letter-spacing:-0.2px">build_cbases.prd*</div>
<svg class="b" style="left:478px;top:95px;" width="10" height="9" viewBox="0 0 10 9"><path d="M0.8 0.5 L9.2 8.5 M9.2 0.5 L0.8 8.5" stroke="#d0e4f6" stroke-width="1.1"/></svg>
<div class="b" style="left:221px;top:108px;width:976px;height:2px;background:#007acc"></div>
<svg class="b" style="left:1165px;top:93px;" width="6" height="9" viewBox="0 0 6 9"><path d="M5.5 0.5 L0.8 4.5 L5.5 8.5Z" fill="none" stroke="#555" stroke-width="0.9"/></svg>
<svg class="b" style="left:1178px;top:93px;" width="6" height="9" viewBox="0 0 6 9"><path d="M0.5 0.5 L5.2 4.5 L0.5 8.5Z" fill="none" stroke="#555" stroke-width="0.9"/></svg>
<div class="b" style="left:221px;top:110px;width:776px;height:775px;background:#eeeef2"></div>
<div class="b" style="left:221px;top:110px;width:37px;height:775px;background:linear-gradient(to right,#eeeef2,#f6f6f8)"></div>
<div class="b" style="left:223px;top:114px;width:28px;height:24px;box-sizing:border-box;border:1.5px solid #2a7ad0;background:#eef2f8"></div>
<svg class="b" style="left:229px;top:117px;" width="16" height="17" viewBox="0 0 16 17"><g fill="#3f66a8"><circle cx="5.5" cy="11" r="4.6"/><circle cx="11.5" cy="4.5" r="3.3"/></g><g fill="#5d82c0" opacity="0.9"><path d="M5.5 5.5 V16.5 M0 11 H11 M1.6 7.1 L9.4 14.9 M9.4 7.1 L1.6 14.9" stroke="#3f66a8" stroke-width="2"/></g><circle cx="5.5" cy="11" r="1.4" fill="#fff"/><circle cx="11.5" cy="4.5" r="1.2" fill="#cfe0ff"/></svg>
<svg class="b" style="left:229px;top:143px;" width="16" height="20" viewBox="0 0 16 20"><path d="M0.5 0.5 H10.5 L15 5 V19.5 H0.5Z" fill="#eef4f2" stroke="#98a8a4"/><path d="M10.5 0.5 V5 H15" fill="none" stroke="#98a8a4"/><path d="M3 6 H9 M3 8.5 H12.5 M3 11 H12.5 M3 13.5 H12.5 M3 16 H9" stroke="#a8b8b4" stroke-width="1"/></svg>
<div class="b" style="left:729px;top:129px;width:8px;height:2px;background:#8a8a8a"></div>
<div class="b" style="left:741px;top:129px;width:102px;height:1px;background:#9a9a9a"></div>
<div class="b" style="left:790px;top:124px;width:3px;height:11px;background:#8a8a8a"></div>
<svg class="b" style="left:847px;top:126px;" width="8" height="8" viewBox="0 0 8 8"><path d="M4 0 V8 M0 4 H8" stroke="#8a8a8a" stroke-width="1.8"/></svg>
<div class="t " style="left:859.7px;top:125.37px;font-size:11.5px;line-height:11.5px;color:#1e1e1e;font-weight:normal;">Configuration:</div>
<div class="b" style="left:940px;top:118px;width:150px;height:24px;background:#fff;box-sizing:border-box;border:1px solid #a0a0a0"></div>
<div class="t " style="left:943.7px;top:125.37px;font-size:11.5px;line-height:11.5px;color:#1e1e1e;font-weight:normal;">Main</div>
<svg class="b" style="left:1078px;top:129px;" width="6" height="3" viewBox="0 0 6 3"><path d="M0 0 H6 L3 3Z" fill="#777"/></svg>
<div class="t " style="left:1094px;top:125.37px;font-size:11.5px;line-height:11.5px;color:#1e1e1e;font-weight:normal;">Show Results</div>
<svg class="b" style="left:1167px;top:122px;" width="16" height="13" viewBox="0 0 16 13"><path d="M1 4 H8 V0.5 L15.5 6.5 L8 12.5 V9 H1Z" fill="#48a0e8" stroke="#2a80d0" stroke-width="0.8"/></svg>
<div class="b" style="left:259px;top:148px;width:718px;height:322px;background:#ffffff"></div>
<svg class="b" style="left:259px;top:148px" width="718" height="322" viewBox="259 148 718 322" font-family="Liberation Sans, sans-serif"><defs><linearGradient id="ng" x1="0" y1="0" x2="0" y2="1"><stop offset="0" stop-color="#a8d0de"/><stop offset="1" stop-color="#8db5c4"/></linearGradient></defs><path d="M358 213.5 H383.5" stroke="#808080" stroke-width="2"/><path d="M382.0 208.7 L391.5 213.5 L382.0 218.3Z" fill="#808080"/><path d="M458 213.5 H483.5" stroke="#808080" stroke-width="2"/><path d="M482.0 208.7 L491.5 213.5 L482.0 218.3Z" fill="#808080"/><path d="M558 213.5 H634" stroke="#808080" stroke-width="2"/><path d="M632.5 208.7 L642 213.5 L632.5 218.3Z" fill="#808080"/><path d="M708 213.5 H808.5" stroke="#808080" stroke-width="2"/><path d="M807.0 208.7 L816.5 213.5 L807.0 218.3Z" fill="#808080"/><path d="M891 213.5 H933.5" stroke="#808080" stroke-width="2"/><path d="M932.0 208.7 L941.5 213.5 L932.0 218.3Z" fill="#808080"/><path d="M651 238 L626 261.5 H572.5 V363 H583" fill="none" stroke="#6495ed" stroke-width="2.1"/><path d="M582 358.5 L592.5 363 L582 367.5Z" fill="#6495ed"/><path d="M783 313 H802 M802 480 V261.5 H722 L705 245" fill="none" stroke="#6495ed" stroke-width="2.1"/><path d="M698 237 L709.5 240.5 L701.5 248.5Z" fill="#6495ed"/><path d="M659 360 L697 313 H708" fill="none" stroke="#6495ed" stroke-width="2.1"/><path d="M707 308.5 L717 313 L707 317.5Z" fill="#6495ed"/><path d="M658 365 L690 406" fill="none" stroke="#6495ed" stroke-width="2.1"/><circle cx="675" cy="214" r="32" fill="url(#ng)" stroke="#808080" stroke-width="2.1"/><text x="675" y="210.2" text-anchor="middle" font-size="10.7" fill="#111">Loop</text><text x="675" y="221.8" text-anchor="middle" font-size="10.7" fill="#111">Extracts</text><circle cx="325" cy="214" r="32" fill="url(#ng)" stroke="#808080" stroke-width="2.1"/><text x="325" y="216.2" text-anchor="middle" font-size="10.7" fill="#111">Start</text><rect x="392.5" y="182" width="64.5" height="64" fill="url(#ng)" stroke="#808080" stroke-width="2.1"/><text x="424.75" y="191" text-anchor="middle" font-size="10.7" font-weight="bold" fill="#111">Parameter</text><text x="424.75" y="241.8" text-anchor="middle" font-size="10.7" fill="#111">Set Parms</text><rect x="493" y="182" width="64" height="64" fill="url(#ng)" stroke="#808080" stroke-width="2.1"/><text x="525.0" y="191" text-anchor="middle" font-size="10.7" font-weight="bold" fill="#111">Integrator</text><text x="525.0" y="217.9" text-anchor="middle" font-size="10.7" fill="#111">Data Extract</text><text x="525.0" y="229.7" text-anchor="middle" font-size="10.7" fill="#111">- Invoice</text><text x="525.0" y="241.5" text-anchor="middle" font-size="10.7" fill="#111">Detail</text><rect x="826" y="190" width="64.5" height="64.5" fill="url(#ng)" stroke="#808080" stroke-width="2.1"/><text x="858.25" y="199" text-anchor="middle" font-size="10.7" font-weight="bold" fill="#111"></text><rect x="822" y="186" width="64.5" height="64.5" fill="url(#ng)" stroke="#808080" stroke-width="2.1"/><text x="854.25" y="195" text-anchor="middle" font-size="10.7" font-weight="bold" fill="#111"></text><rect x="818" y="182" width="64.5" height="64" fill="url(#ng)" stroke="#808080" stroke-width="2.1"/><text x="850.25" y="191" text-anchor="middle" font-size="10.7" font-weight="bold" fill="#111">Integrator</text><text x="850.25" y="242" text-anchor="middle" font-size="10.7" fill="#111">Data Prep</text><rect x="943" y="182" width="64" height="64" fill="url(#ng)" stroke="#808080" stroke-width="2.1"/><text x="975.0" y="191" text-anchor="middle" font-size="10.7" font-weight="bold" fill="#111">Integrator</text><text x="975.0" y="242" text-anchor="middle" font-size="10.7" fill="#111">Sales Cube</text><rect x="718" y="282" width="64" height="64" fill="url(#ng)" stroke="#808080" stroke-width="2.1"/><text x="750.0" y="291" text-anchor="middle" font-size="10.7" font-weight="bold" fill="#111">Integrator</text><text x="750.0" y="329.7" text-anchor="middle" font-size="10.7" fill="#111">Data Extract</text><text x="750.0" y="341.5" text-anchor="middle" font-size="10.7" fill="#111">- Tables</text><circle cx="625" cy="364" r="32" fill="url(#ng)" stroke="#808080" stroke-width="2.1"/><text x="625" y="360" text-anchor="middle" font-size="10.7" fill="#111">Data Extract</text><text x="625" y="371.6" text-anchor="middle" font-size="10.7" fill="#111">- Condition</text><rect x="718" y="381" width="64" height="64" fill="url(#ng)" stroke="#808080" stroke-width="2.1"/><text x="750.0" y="390" text-anchor="middle" font-size="10.7" font-weight="bold" fill="#111">Integrator</text></svg>
<div class="b" style="left:977px;top:148px;width:15px;height:322px;background:#fdfdfd"></div>
<svg class="b" style="left:981px;top:155px;" width="8" height="5" viewBox="0 0 8 5"><path d="M0.7 4.5 L4 1 L7.3 4.5" fill="none" stroke="#555" stroke-width="1.6"/></svg>
<div class="b" style="left:977px;top:165px;width:15px;height:284px;background:#c6c6c8"></div>
<svg class="b" style="left:981px;top:458px;" width="8" height="5" viewBox="0 0 8 5"><path d="M0.7 0.5 L4 4 L7.3 0.5" fill="none" stroke="#555" stroke-width="1.6"/></svg>
<div class="b" style="left:259px;top:470px;width:733px;height:15px;background:#ededf0"></div>
<svg class="b" style="left:264px;top:474px;" width="6" height="8" viewBox="0 0 6 8"><path d="M5 0.7 L1.2 4 L5 7.3" fill="none" stroke="#555" stroke-width="1.6"/></svg>
<div class="b" style="left:276px;top:471px;width:560px;height:13px;background:#c6c6c8"></div>
<svg class="b" style="left:965px;top:474px;" width="6" height="8" viewBox="0 0 6 8"><path d="M1 0.7 L4.8 4 L1 7.3" fill="none" stroke="#555" stroke-width="1.6"/></svg>
<div class="b" style="left:257px;top:489px;width:738px;height:3px;background:#dadade"></div>
<div class="b" style="left:257px;top:492px;width:738px;height:20px;background:#007acc"></div>
<div class="t " style="left:260.5px;top:497.97px;font-size:11.5px;line-height:11.5px;color:#ffffff;font-weight:normal;">Overview</div>
<svg class="b" style="left:314px;top:500px;" width="660" height="5" viewBox="0 0 660 5"><defs><pattern id="pd2" x="0" y="0" width="4" height="4" patternUnits="userSpaceOnUse"><rect x="2" y="0" width="1" height="1" fill="#7fbbe8"/><rect x="0" y="2" width="1" height="1" fill="#7fbbe8"/></pattern></defs><rect x="0" y="0" width="660" height="5" fill="url(#pd2)"/></svg>
<svg class="b" style="left:982px;top:497px;" width="8" height="10" viewBox="0 0 8 10"><path d="M1.5 0.5 H6.5 M2.5 0.5 V5.5 H5.5 V0.5 M0.5 5.5 H7.5 M4 5.5 V10" fill="none" stroke="#fff" stroke-width="1.3"/></svg>
<div class="b" style="left:257px;top:512px;width:738px;height:370px;background:#f0f0f0"></div>
<div class="t " style="left:264.8px;top:519.53px;font-size:10.6px;line-height:10.6px;color:#000;font-weight:normal;">Connection:</div>
<div class="t " style="left:264.8px;top:539.73px;font-size:10.6px;line-height:10.6px;color:#000;font-weight:normal;">Script Name:</div>
<div class="t " style="left:264.8px;top:559.43px;font-size:10.6px;line-height:10.6px;color:#000;font-weight:normal;">Script Path:</div>
<div class="t " style="left:264.8px;top:584.53px;font-size:10.6px;line-height:10.6px;color:#000;font-weight:normal;">Log Files:</div>
<div class="t " style="left:264.8px;top:641.43px;font-size:10.6px;line-height:10.6px;color:#000;font-weight:normal;">Schedules:</div>
<div class="b" style="left:262px;top:668px;width:520px;height:207px;background:#fff;box-sizing:border-box;border:1px solid #828282"></div>
<div class="b" style="left:303px;top:670px;width:1px;height:187px;background:#e6e6e6"></div>
<div class="b" style="left:263px;top:709px;width:518px;height:1px;background:#ececec"></div>
<div class="b" style="left:263px;top:726px;width:518px;height:1px;background:#ececec"></div>
<div class="b" style="left:263px;top:743px;width:518px;height:1px;background:#ececec"></div>
<div class="b" style="left:263px;top:760px;width:518px;height:1px;background:#ececec"></div>
<div class="b" style="left:263px;top:777px;width:518px;height:1px;background:#ececec"></div>
<div class="b" style="left:263px;top:794px;width:518px;height:1px;background:#ececec"></div>
<div class="b" style="left:263px;top:811px;width:518px;height:1px;background:#ececec"></div>
<div class="b" style="left:263px;top:828px;width:518px;height:1px;background:#ececec"></div>
<div class="b" style="left:263px;top:845px;width:518px;height:1px;background:#ececec"></div>
<div class="t " style="left:269.3px;top:676.03px;font-size:10.6px;line-height:10.6px;color:#000;font-weight:normal;">Name</div>
<div class="t " style="left:309px;top:676.03px;font-size:10.6px;line-height:10.6px;color:#000;font-weight:normal;">Schedule</div>
<div class="b" style="left:263px;top:858px;width:518px;height:16px;background:#f0f0f0"></div>
<svg class="b" style="left:267px;top:862px;" width="6" height="8" viewBox="0 0 6 8"><path d="M5 0.7 L1.2 4 L5 7.3" fill="none" stroke="#555" stroke-width="1.6"/></svg>
<div class="b" style="left:279px;top:859px;width:560px;height:14px;background:#cdcdcd"></div>
<div class="b" style="left:700px;top:521px;width:218px;height:1px;background:#d5d5d5"></div>
<div class="b" style="left:917px;top:521px;width:1px;height:355px;background:#d5d5d5"></div>
<div class="b" style="left:918px;top:521px;width:1px;height:355px;background:#fff"></div>
<div class="b" style="left:700px;top:875px;width:218px;height:1px;background:#d5d5d5"></div>
<div class="b" style="left:920px;top:521px;width:75px;height:1px;background:#d5d5d5"></div>
<div class="b" style="left:920px;top:521px;width:1px;height:355px;background:#d5d5d5"></div>
<div class="b" style="left:920px;top:876px;width:75px;height:1px;background:#d5d5d5"></div>
<div class="b" style="left:921px;top:516px;width:74px;height:14px;background:#f0f0f0"></div>
<div class="b" style="left:0;top:0;width:1197px;height:915px;clip-path:inset(510px 204px 385px 921px)">
<div class="t " style="left:926.6px;top:516.73px;font-size:10.6px;line-height:10.6px;color:#000;font-weight:normal;">Current Configuration</div>
</div>
<div class="b" style="left:760px;top:538px;width:67px;height:21px;background:#e1e1e1;box-sizing:border-box;border:1px solid #adadad"></div>
<div class="b" style="left:835px;top:538px;width:73px;height:21px;background:#cccccc"></div>
<div class="t " style="left:855.6px;top:543.83px;font-size:10.6px;line-height:10.6px;color:#a0a0a0;font-weight:normal;">Delete</div>
<div class="b" style="left:925px;top:538px;width:68px;height:19px;background:#e1e1e1;box-sizing:border-box;border:1px solid #adadad"></div>
<div class="b" style="left:0;top:0;width:1197px;height:915px;clip-path:inset(530px 204px 355px 926px)">
<div class="t " style="left:938px;top:543.53px;font-size:10.6px;line-height:10.6px;color:#000;font-weight:normal;">Enable All Nodes</div>
</div>
<div class="b" style="left:700px;top:566px;width:208px;height:305px;background:#ababab;box-sizing:border-box;border:2px solid #111;border-left:none"></div>
<div class="b" style="left:700px;top:568px;width:206px;height:19px;background:#fff"></div>
<div class="b" style="left:855px;top:568px;width:1px;height:41px;background:#d8d8d8"></div>
<div class="b" style="left:700px;top:587px;width:206px;height:1px;background:#d0d0d0"></div>
<div class="t " style="left:863.3px;top:572.63px;font-size:10.6px;line-height:10.6px;color:#000;font-weight:normal;">Default</div>
<div class="b" style="left:700px;top:588px;width:155px;height:21px;background:#0078d7"></div>
<div class="b" style="left:856px;top:588px;width:50px;height:21px;background:#fff"></div>
<svg class="b" style="left:875px;top:593px;" width="11" height="11" viewBox="0 0 11 11"><circle cx="5.5" cy="5.5" r="4.6" fill="#fff" stroke="#888" stroke-width="1.2"/><circle cx="5.5" cy="5.5" r="3.1" fill="#000"/></svg>
<div class="b" style="left:924px;top:566px;width:69px;height:305px;background:#ababab;box-sizing:border-box;border:2px solid #111;border-right:none"></div>
<div class="b" style="left:926px;top:568px;width:67px;height:17px;background:#cbcbcf"></div>
<div class="b" style="left:926px;top:585px;width:67px;height:1px;background:#9a9a9a"></div>
<div class="b" style="left:926px;top:586px;width:18px;height:20px;background:#cbcbcf"></div>
<div class="b" style="left:944px;top:568px;width:1px;height:38px;background:#9a9a9a"></div>
<div class="b" style="left:945px;top:586px;width:48px;height:20px;background:#fff"></div>
<svg class="b" style="left:932px;top:572px;" width="10" height="10" viewBox="0 0 10 10"><path d="M10 0 V10 H0Z" fill="#111"/></svg>
<div class="b" style="left:0;top:0;width:1197px;height:915px;clip-path:inset(560px 204px 315px 926px)">
<div class="t " style="left:951.3px;top:571.63px;font-size:10.6px;line-height:10.6px;color:#000;font-weight:normal;">Parameter</div>
</div>
<div class="b" style="left:996px;top:145px;width:192px;height:736px;background:#ffffff"></div>
<div class="b" style="left:1188px;top:145px;width:6px;height:736px;background:#eeeef2"></div>
<div class="b" style="left:999px;top:147px;width:162px;height:21px;background:#fff;box-sizing:border-box;border:1px solid #9a9a9a"></div>
<svg class="b" style="left:1004px;top:149px;" width="16" height="15" viewBox="0 0 16 15"><path d="M6 9 L1.5 13.5" stroke="#888" stroke-width="2.4" stroke-linecap="round"/><circle cx="10" cy="5.5" r="4.6" fill="#e4eef8" stroke="#8aa0b8" stroke-width="1.2"/></svg>
<div class="b" style="left:1163px;top:146px;width:24px;height:22px;background:#63bcff"></div>
<svg class="b" style="left:1167px;top:149px;" width="16" height="16" viewBox="0 0 16 16"><path d="M2 14 L7 9" stroke="#333" stroke-width="1"/><path d="M6 7 L10 11 L8.5 12.5 L3.5 7.5Z M7 6 L11 2.5 L13.5 5 L10 9Z M10 1.5 L14.5 6 " fill="#e04848" stroke="#c02828" stroke-width="0.8"/></svg>
<div class="b" style="left:997px;top:169px;width:191px;height:18px;background:#e9e9ea;box-sizing:border-box;border:1px solid #d6d6d8"></div>
<svg class="b" style="left:1003.5px;top:175.5px;" width="5" height="5" viewBox="0 0 5 5"><path d="M5 0 V5 H0Z" fill="#444"/></svg>
<div class="t " style="left:1015.7px;top:173.07px;font-size:11.5px;line-height:11.5px;color:#1e1e1e;font-weight:normal;">Process</div>
<div class="b" style="left:997px;top:588px;width:191px;height:19px;background:#e9e9ea;box-sizing:border-box;border:1px solid #d6d6d8"></div>
<svg class="b" style="left:1003.5px;top:595.0px;" width="5" height="5" viewBox="0 0 5 5"><path d="M5 0 V5 H0Z" fill="#444"/></svg>
<div class="t " style="left:1015.7px;top:593.07px;font-size:11.5px;line-height:11.5px;color:#1e1e1e;font-weight:normal;">Control</div>
<div class="b" style="left:997px;top:704.5px;width:191px;height:18.0px;background:#e9e9ea;box-sizing:border-box;border:1px solid #d6d6d8"></div>
<svg class="b" style="left:1003.5px;top:711.0px;" width="5" height="5" viewBox="0 0 5 5"><path d="M5 0 V5 H0Z" fill="#444"/></svg>
<div class="t " style="left:1015.7px;top:708.57px;font-size:11.5px;line-height:11.5px;color:#1e1e1e;font-weight:normal;">Extensions</div>
<svg class="b" style="left:1001px;top:190.0px;" width="16" height="16" viewBox="0 0 16 16"><ellipse cx="11" cy="15.3" rx="6" ry="0.9" fill="#e4e4e4"/><path d="M5 0.6 C9 0.4 12.5 2 14 5 L15.3 6.6 C16.2 7.6 14.6 9.2 13.6 8.2 L11.2 6.6 L9.8 8 L8 6.5 L9.6 5 C8.6 3 7 1.5 5 0.6Z" fill="#d4d4d4" stroke="#9a9a9a" stroke-width="0.7"/><path d="M1.8 14.2 L9.4 6.6" stroke="#151515" stroke-width="2.9" stroke-linecap="round"/><path d="M2.5 13.5 L8.5 7.5" stroke="#666" stroke-width="0.6" stroke-dasharray="0.8 1.2"/></svg>
<div class="t " style="left:1021.7px;top:193.77px;font-size:11.5px;line-height:11.5px;color:#1e1e1e;font-weight:normal;">Build cBase</div>
<svg class="b" style="left:1001px;top:209.0px;" width="16" height="16" viewBox="0 0 16 16"><ellipse cx="11" cy="15.3" rx="6" ry="0.9" fill="#e4e4e4"/><path d="M5 0.6 C9 0.4 12.5 2 14 5 L15.3 6.6 C16.2 7.6 14.6 9.2 13.6 8.2 L11.2 6.6 L9.8 8 L8 6.5 L9.6 5 C8.6 3 7 1.5 5 0.6Z" fill="#d4d4d4" stroke="#9a9a9a" stroke-width="0.7"/><path d="M1.8 14.2 L9.4 6.6" stroke="#151515" stroke-width="2.9" stroke-linecap="round"/><path d="M2.5 13.5 L8.5 7.5" stroke="#666" stroke-width="0.6" stroke-dasharray="0.8 1.2"/></svg>
<div class="t " style="left:1021.7px;top:212.77px;font-size:11.5px;line-height:11.5px;color:#1e1e1e;font-weight:normal;">Build Model</div>
<svg class="b" style="left:1001px;top:228.0px;" width="16" height="16" viewBox="0 0 16 16"><path d="M0.5 15.5 V2 H3 V8 L6.5 5 V8 L10 5 V8 L13.5 5 V15.5Z" fill="#2aa8e0"/><rect x="3" y="10" width="2" height="2" fill="#fff"/><rect x="7" y="10" width="2" height="2" fill="#fff"/><rect x="11" y="10" width="2" height="2" fill="#fff"/></svg>
<div class="t " style="left:1021.7px;top:231.77px;font-size:11.5px;line-height:11.5px;color:#1e1e1e;font-weight:normal;">Build Factory</div>
<svg class="b" style="left:1001px;top:247.0px;" width="16" height="16" viewBox="0 0 16 16"><rect x="3.5" y="3.5" width="8" height="12" rx="1.5" fill="#444"/><rect x="5" y="6" width="5" height="5" fill="#999"/><rect x="6" y="0.5" width="1.5" height="3.5" fill="#333"/><path d="M12 7 L9 12 H11.5 L10 16 L14.5 10.5 H12 L13.5 7Z" fill="#f0c020"/></svg>
<div class="t " style="left:1021.7px;top:250.77px;font-size:11.5px;line-height:11.5px;color:#1e1e1e;font-weight:normal;">CacheDT</div>
<svg class="b" style="left:1001px;top:266.0px;" width="16" height="16" viewBox="0 0 16 16"><path d="M0.5 0.5 H6.5 L9.5 3.5 V12.5 H0.5Z" fill="#fff" stroke="#8a98a8"/><path d="M5.5 4.5 H11 L14.5 8 V15.5 H5.5Z" fill="#fff" stroke="#8a98a8"/></svg>
<div class="t " style="left:1021.7px;top:269.77px;font-size:11.5px;line-height:11.5px;color:#1e1e1e;font-weight:normal;">Copy</div>
<svg class="b" style="left:1001px;top:285.0px;" width="16" height="16" viewBox="0 0 16 16"><path d="M2 0.5 H13 M2 15.5 H13" stroke="#8a6a40" stroke-width="1.4"/><path d="M3 1 H12 C12 5 8.5 7 7.5 8 C8.5 9 12 11 12 15 H3 C3 11 6.5 9 7.5 8 C6.5 7 3 5 3 1Z" fill="#f0f4f8" stroke="#9aa"/><path d="M4.5 14 C5 12 7 11 7.5 10.5 C8 11 10 12 10.5 14Z" fill="#d8a860"/></svg>
<div class="t " style="left:1021.7px;top:288.77px;font-size:11.5px;line-height:11.5px;color:#1e1e1e;font-weight:normal;">Delay</div>
<svg class="b" style="left:1001px;top:304.0px;" width="16" height="16" viewBox="0 0 16 16"><path d="M1.5 0.5 H9.5 L13.5 4.5 V15.5 H1.5Z" fill="#f8f8f8" stroke="#9aa"/><path d="M5 8 L9.5 12.5 M9.5 8 L5 12.5" stroke="#e02020" stroke-width="1.3"/></svg>
<div class="t " style="left:1021.7px;top:307.77px;font-size:11.5px;line-height:11.5px;color:#1e1e1e;font-weight:normal;">Delete</div>
<svg class="b" style="left:1001px;top:323.0px;" width="16" height="16" viewBox="0 0 16 16"><rect x="0.5" y="0.5" width="14" height="15" fill="#f4f6f8" stroke="#a8b0b8"/><path d="M2.5 3 L6 6 L2.5 9" fill="none" stroke="#3050a0" stroke-width="1.3"/></svg>
<div class="t " style="left:1021.7px;top:326.77px;font-size:11.5px;line-height:11.5px;color:#1e1e1e;font-weight:normal;">DIAL</div>
<svg class="b" style="left:1001px;top:342.0px;" width="16" height="16" viewBox="0 0 16 16"><rect x="0" y="0" width="16" height="16" fill="#e82020"/><path d="M0 2 L14 16 H16 V14 L2 0 H0Z" fill="#fff"/></svg>
<div class="t " style="left:1021.7px;top:345.77px;font-size:11.5px;line-height:11.5px;color:#1e1e1e;font-weight:normal;">Dive</div>
<svg class="b" style="left:1001px;top:361.0px;" width="16" height="16" viewBox="0 0 16 16"><rect x="0" y="0.5" width="16" height="15" rx="1" fill="#222"/><path d="M3 3.5 L8 7 L3 10.5" fill="none" stroke="#f0a830" stroke-width="1.8"/><rect x="8" y="11" width="5" height="1.5" fill="#888"/></svg>
<div class="t " style="left:1021.7px;top:364.77px;font-size:11.5px;line-height:11.5px;color:#1e1e1e;font-weight:normal;">Execute</div>
<svg class="b" style="left:1001px;top:380.0px;" width="16" height="16" viewBox="0 0 16 16"><rect x="0.5" y="1.5" width="12" height="9" fill="#4a78c8" stroke="#555"/><rect x="4" y="11" width="5" height="3" fill="#888"/><rect x="12" y="2" width="3.5" height="13" fill="#bbb" stroke="#777" stroke-width="0.7"/><circle cx="12" cy="14" r="2.5" fill="#3ab03a"/></svg>
<div class="t " style="left:1021.7px;top:383.77px;font-size:11.5px;line-height:11.5px;color:#1e1e1e;font-weight:normal;">FTP</div>
<svg class="b" style="left:1001px;top:399.0px;" width="16" height="16" viewBox="0 0 16 16"><path d="M0.5 0.5 H15.5 L9.5 7.5 V15 L6.5 13 V7.5Z" fill="#d0d0d0" stroke="#888"/></svg>
<div class="t " style="left:1021.7px;top:402.77px;font-size:11.5px;line-height:11.5px;color:#1e1e1e;font-weight:normal;">Integ</div>
<svg class="b" style="left:1001px;top:418.0px;" width="16" height="16" viewBox="0 0 16 16"><path d="M0.5 2.5 H6 L7.5 4 H15.5 V14.5 H0.5Z" fill="#f0d070" stroke="#c8a040"/><path d="M12 9 V16 M8.5 12.5 H15.5" stroke="#2ca02c" stroke-width="2.4"/></svg>
<div class="t " style="left:1021.7px;top:421.77px;font-size:11.5px;line-height:11.5px;color:#1e1e1e;font-weight:normal;">Mkdir</div>
<svg class="b" style="left:1001px;top:437.0px;" width="16" height="16" viewBox="0 0 16 16"><rect x="1.5" y="3.5" width="13" height="12" fill="#f4f4f4" stroke="#888"/><path d="M3.5 7 H12 M3.5 9.5 H12 M3.5 12 H12" stroke="#999"/><path d="M4 4 L10 0.5 L15 3 L11 5Z" fill="#e89850"/></svg>
<div class="t " style="left:1021.7px;top:440.77px;font-size:11.5px;line-height:11.5px;color:#1e1e1e;font-weight:normal;">Parameter</div>
<svg class="b" style="left:1001px;top:456.0px;" width="16" height="16" viewBox="0 0 16 16"><rect x="3" y="0.5" width="10" height="6" fill="#e8f0f0" stroke="#999"/><rect x="0.5" y="5.5" width="15" height="7" rx="1" fill="#555" stroke="#333"/><rect x="3" y="10.5" width="10" height="5" fill="#f4f4f4" stroke="#999"/></svg>
<div class="t " style="left:1021.7px;top:459.77px;font-size:11.5px;line-height:11.5px;color:#1e1e1e;font-weight:normal;">PrintDP</div>
<svg class="b" style="left:1001px;top:475.0px;" width="16" height="16" viewBox="0 0 16 16"><circle cx="8" cy="8" r="5.5" fill="none" stroke="#a0a0a0" stroke-width="3.5" stroke-dasharray="2.2 1.4"/><circle cx="8" cy="8" r="3.5" fill="none" stroke="#b8b8b8" stroke-width="1.5"/></svg>
<div class="t " style="left:1021.7px;top:478.77px;font-size:11.5px;line-height:11.5px;color:#1e1e1e;font-weight:normal;">Production</div>
<svg class="b" style="left:1001px;top:494.0px;" width="16" height="16" viewBox="0 0 16 16"><rect x="0.5" y="9.5" width="15" height="6" rx="1" fill="#d8d8d8" stroke="#888"/><path d="M4 8 C4 3 9 2 12 3 L11 0.5 L15 4 L11 7 L11.5 5 C9 4.5 6 5.5 6 8Z" fill="#2a90e0"/></svg>
<div class="t " style="left:1021.7px;top:497.77px;font-size:11.5px;line-height:11.5px;color:#1e1e1e;font-weight:normal;">Spectre Cache Refresh</div>
<svg class="b" style="left:1001px;top:513.0px;" width="16" height="16" viewBox="0 0 16 16"><rect x="0.5" y="0.5" width="15" height="11" fill="#ccc" stroke="#777"/><rect x="2" y="2" width="12" height="8" fill="#222"/><path d="M3 3.5 L5 5 L3 6.5" stroke="#eee" fill="none" stroke-width="0.8"/><rect x="5" y="12" width="6" height="2" fill="#888"/><circle cx="8" cy="14.5" r="1.5" fill="#3ab03a"/></svg>
<div class="t " style="left:1021.7px;top:516.77px;font-size:11.5px;line-height:11.5px;color:#1e1e1e;font-weight:normal;">Ssh</div>
<svg class="b" style="left:1001px;top:532.0px;" width="16" height="16" viewBox="0 0 16 16"><path d="M1.5 0.5 H8.5 L12.5 4.5 V15.5 H1.5Z" fill="#fafafa" stroke="#999"/><path d="M12 9 V16 M8.5 12.5 H15.5" stroke="#2ca02c" stroke-width="2.4"/></svg>
<div class="t " style="left:1021.7px;top:535.77px;font-size:11.5px;line-height:11.5px;color:#1e1e1e;font-weight:normal;">Trigger</div>
<svg class="b" style="left:1001px;top:551.0px;" width="16" height="16" viewBox="0 0 16 16"><rect x="1.5" y="1.5" width="12" height="13" rx="2" fill="#f2d48a" stroke="#d8b060"/><path d="M10 5 L15.5 8 L10 11Z" fill="#e8c060" stroke="#c8a040" stroke-width="0.7"/><rect x="1" y="4" width="1.5" height="3" fill="#60c0f0"/></svg>
<div class="t " style="left:1021.7px;top:554.77px;font-size:11.5px;line-height:11.5px;color:#1e1e1e;font-weight:normal;">Unzip</div>
<svg class="b" style="left:1001px;top:570.0px;" width="16" height="16" viewBox="0 0 16 16"><rect x="2.5" y="1.5" width="12" height="13" rx="2" fill="#f2d48a" stroke="#d8b060"/><path d="M6 5 L0.5 8 L6 11Z" fill="#e8c060" stroke="#c8a040" stroke-width="0.7"/><rect x="12" y="9" width="1.5" height="3" fill="#60c0f0"/></svg>
<div class="t " style="left:1021.7px;top:573.77px;font-size:11.5px;line-height:11.5px;color:#1e1e1e;font-weight:normal;">Zip</div>
<svg class="b" style="left:1001px;top:609.9px;" width="16" height="16" viewBox="0 0 16 16"><path d="M1 4.5 H10" stroke="#3aa0e8" stroke-width="3.4"/><path d="M9.5 0.5 L15.5 4.5 L9.5 8.5Z" fill="#2a90e0"/><path d="M8 5 V10.5" stroke="#2a88d8" stroke-width="3.4"/><path d="M3.5 10 H12.5 L8 15.5Z" fill="#1a78c8"/></svg>
<div class="t " style="left:1021.7px;top:613.67px;font-size:11.5px;line-height:11.5px;color:#1e1e1e;font-weight:normal;">Conditional</div>
<svg class="b" style="left:1001px;top:628.9px;" width="16" height="16" viewBox="0 0 16 16"><path d="M4 12.5 H3 C2 12.5 1.5 12 1.5 11 V3.5 C1.5 2.5 2 2 3 2 H13 C14 2 14.5 2.5 14.5 3.5 V11 C14.5 12 14 12.5 13 12.5 H9" fill="none" stroke="#3aa0e8" stroke-width="3"/><path d="M10 8.5 L5 12.5 L10 16Z" fill="#1a78c8"/></svg>
<div class="t " style="left:1021.7px;top:632.67px;font-size:11.5px;line-height:11.5px;color:#1e1e1e;font-weight:normal;">Loop</div>
<svg class="b" style="left:1001px;top:647.9px;" width="16" height="16" viewBox="0 0 16 16"><path d="M13 2.5 L3.5 8 L13 13.5" fill="none" stroke="#3aa0e8" stroke-width="3.2"/><path d="M9.5 0 L15.5 1.5 L12 6Z M9.5 16 L15.5 14.5 L12 10Z" fill="#1a78c8"/></svg>
<div class="t " style="left:1021.7px;top:651.67px;font-size:11.5px;line-height:11.5px;color:#1e1e1e;font-weight:normal;">Fork</div>
<svg class="b" style="left:1001px;top:666.9px;" width="16" height="16" viewBox="0 0 16 16"><path d="M3 2.5 L12.5 8 L3 13.5" fill="none" stroke="#3aa0e8" stroke-width="3.2"/><path d="M6.5 0 L0.5 1.5 L4 6Z M6.5 16 L0.5 14.5 L4 10Z" fill="#1a78c8"/><path d="M10 5 L15.5 8 L10 11Z" fill="#2a90e0"/></svg>
<div class="t " style="left:1021.7px;top:670.67px;font-size:11.5px;line-height:11.5px;color:#1e1e1e;font-weight:normal;">Wait</div>
<svg class="b" style="left:1001px;top:685.9px;" width="16" height="16" viewBox="0 0 16 16"><path d="M0.5 8 H8" stroke="#3aa0e8" stroke-width="3.6"/><path d="M7 2.5 L12.5 8 L7 13.5Z" fill="#2a90e0"/><rect x="13" y="1" width="2.5" height="14" fill="#1a78c8"/></svg>
<div class="t " style="left:1021.7px;top:689.67px;font-size:11.5px;line-height:11.5px;color:#1e1e1e;font-weight:normal;">End</div>
<svg class="b" style="left:1001px;top:726.3px;" width="16" height="16" viewBox="0 0 16 16"><path d="M0.5 2 C3 0.5 13 0.5 15.5 2 V5 C12 7 10 7 8 7 C6 7 4 7 0.5 5Z" fill="#555"/><circle cx="8" cy="11.5" r="2.8" fill="#666"/></svg>
<div class="t " style="left:1021.7px;top:730.07px;font-size:11.5px;line-height:11.5px;color:#1e1e1e;font-weight:normal;">EditDivePlan</div>
<svg class="b" style="left:1001px;top:745.1999999999999px;" width="16" height="16" viewBox="0 0 16 16"><path d="M3.5 0.5 H11.5 L15.5 4.5 V15.5 H3.5Z" fill="#fafafa" stroke="#777"/><rect x="0" y="4" width="10" height="10" fill="#e02020"/><path d="M2.5 12 L5 6 L7.5 12 M3.5 10 H6.5" stroke="#fff" fill="none" stroke-width="1"/></svg>
<div class="t " style="left:1021.7px;top:748.97px;font-size:11.5px;line-height:11.5px;color:#1e1e1e;font-weight:normal;">mrk2pdf-dimension-walk</div>
<svg class="b" style="left:1001px;top:764.0999999999999px;" width="16" height="16" viewBox="0 0 16 16"><rect x="5" y="0" width="9" height="4" fill="#4a70b8"/><rect x="7.5" y="3.5" width="1.2" height="4" fill="#4a70b8"/><path d="M8 16 L3.5 10 C2.5 7 5 5.5 8 5.5 C11 5.5 13.5 7 12.5 10Z" fill="#e03030"/><rect x="4.5" y="9" width="7" height="1.3" fill="#fff"/></svg>
<div class="t " style="left:1021.7px;top:767.87px;font-size:11.5px;line-height:11.5px;color:#1e1e1e;font-weight:normal;">UpdateMarkerTimeseriesDates</div>
<div class="t " style="left:5.5px;top:896.27px;font-size:11.5px;line-height:11.5px;color:#1e1e1e;font-weight:normal;letter-spacing:-0.15px">Errors (0)</div>
<div class="b" style="left:2px;top:907px;width:52px;height:6px;background:#c4c4c8"></div>
<div class="b" style="left:54px;top:907px;width:1px;height:6px;background:#eeeef2"></div>
<div class="t " style="left:58px;top:896.27px;font-size:11.5px;line-height:11.5px;color:#1e1e1e;font-weight:normal;letter-spacing:-0.15px">Running (0)</div>
<div class="b" style="left:55px;top:907px;width:63.5px;height:6px;background:#c4c4c8"></div>
<div class="b" style="left:118.5px;top:907px;width:1px;height:6px;background:#eeeef2"></div>
<div class="t " style="left:122px;top:896.27px;font-size:11.5px;line-height:11.5px;color:#1e1e1e;font-weight:normal;letter-spacing:-0.15px">Finished jobs</div>
<div class="b" style="left:119.5px;top:907px;width:70.0px;height:6px;background:#c4c4c8"></div>
<div class="b" style="left:189.5px;top:907px;width:1px;height:6px;background:#eeeef2"></div>
<div class="t " style="left:193px;top:896.27px;font-size:11.5px;line-height:11.5px;color:#1e1e1e;font-weight:normal;letter-spacing:-0.15px">Output</div>
<div class="b" style="left:190.5px;top:907px;width:38.5px;height:6px;background:#c4c4c8"></div>
<div class="b" style="left:229px;top:907px;width:1px;height:6px;background:#eeeef2"></div>
<div class="t " style="left:233.5px;top:896.27px;font-size:11.5px;line-height:11.5px;color:#1e1e1e;font-weight:normal;letter-spacing:-0.15px">Find Results</div>
<div class="b" style="left:230px;top:907px;width:67.39999999999998px;height:6px;background:#c4c4c8"></div>
<div class="b" style="left:297.4px;top:907px;width:1px;height:6px;background:#eeeef2"></div>
<div class="t " style="left:301.7px;top:896.27px;font-size:11.5px;line-height:11.5px;color:#1e1e1e;font-weight:normal;letter-spacing:-0.15px">Messages</div>
<div class="b" style="left:298.4px;top:907px;width:56.400000000000034px;height:6px;background:#c4c4c8"></div>
<div class="b" style="left:354.8px;top:907px;width:1px;height:6px;background:#eeeef2"></div>
<div class="t " style="left:358px;top:896.27px;font-size:11.5px;line-height:11.5px;color:#1e1e1e;font-weight:normal;letter-spacing:-0.15px">Git Console</div>
<div class="b" style="left:355.8px;top:907px;width:61.80000000000001px;height:6px;background:#c4c4c8"></div>
<div class="b" style="left:417.6px;top:907px;width:1px;height:6px;background:#eeeef2"></div>
<div class="b" style="left:339px;top:383px;width:486px;height:498px;box-sizing:border-box;border:1px solid #6f6f6f;background:#f0f0f0;box-shadow:0 1px 16px 2px rgba(0,0,0,0.22)"></div>
<div class="b" style="left:340px;top:384px;width:484px;height:30px;background:#ffffff"></div>
<div class="t " style="left:348.4px;top:394.27px;font-size:11.5px;line-height:11.5px;color:#000;font-weight:normal;">Production Job Schedule</div>
<div class="b" style="left:705px;top:398px;width:10px;height:1px;background:#111"></div>
<div class="b" style="left:750px;top:393px;width:10px;height:10px;box-sizing:border-box;border:1px solid #111"></div>
<svg class="b" style="left:796px;top:393px;" width="11" height="11" viewBox="0 0 11 11"><path d="M0.5 0.5 L10.5 10.5 M10.5 0.5 L0.5 10.5" stroke="#111" stroke-width="1.1"/></svg>
<div class="t " style="left:346.3px;top:425.53px;font-size:10.6px;line-height:10.6px;color:#000;font-weight:normal;">Name:</div>
<div class="b" style="left:463px;top:419px;width:346px;height:20px;background:#fff;box-sizing:border-box;border:1px solid #7a7a7a"></div>
<div class="t " style="left:466.4px;top:424.53px;font-size:10.6px;line-height:10.6px;color:#000;font-weight:normal;">Main build_cbases.prd</div>
<div class="t " style="left:345.8px;top:455.33px;font-size:10.6px;line-height:10.6px;color:#000;font-weight:normal;">Connection:</div>
<div class="t " style="left:466.6px;top:455.33px;font-size:10.6px;line-height:10.6px;color:#000;font-weight:normal;">Docs VM  7.1 - MF</div>
<div class="t " style="left:346.3px;top:486.03px;font-size:10.6px;line-height:10.6px;color:#000;font-weight:normal;">Production Script:</div>
<div class="t " style="left:466.6px;top:486.03px;font-size:10.6px;line-height:10.6px;color:#000;font-weight:normal;">/programs/build_cbases.prd</div>
<div class="t " style="left:346.3px;top:515.63px;font-size:10.6px;line-height:10.6px;color:#000;font-weight:normal;">Run Configuration:</div>
<div class="b" style="left:463px;top:507.5px;width:163px;height:21px;background:#e1e1e1;box-sizing:border-box;border:1px solid #adadad"></div>
<div class="t " style="left:467.3px;top:512.53px;font-size:10.6px;line-height:10.6px;color:#000;font-weight:normal;">&lt;default&gt;</div>
<svg class="b" style="left:612px;top:515.5px;" width="10" height="6" viewBox="0 0 10 6"><path d="M0.7 0.7 L5 5 L9.3 0.7" fill="none" stroke="#333" stroke-width="1.1"/></svg>
<div class="t " style="left:346.3px;top:545.73px;font-size:10.6px;line-height:10.6px;color:#000;font-weight:normal;">Schedule:</div>
<div class="b" style="left:463px;top:537px;width:163px;height:21px;background:#e1e1e1;box-sizing:border-box;border:1px solid #adadad"></div>
<div class="t " style="left:467.3px;top:542.03px;font-size:10.6px;line-height:10.6px;color:#000;font-weight:normal;">Daily</div>
<svg class="b" style="left:612px;top:545px;" width="10" height="6" viewBox="0 0 10 6"><path d="M0.7 0.7 L5 5 L9.3 0.7" fill="none" stroke="#333" stroke-width="1.1"/></svg>
<div class="t " style="left:350.5px;top:573.03px;font-size:10.6px;line-height:10.6px;color:#000;font-weight:normal;">Every day at:</div>
<div class="b" style="left:420px;top:569px;width:67px;height:20px;background:#fff;box-sizing:border-box;border:1px solid #7a7a7a"></div>
<div class="t " style="left:422.2px;top:574.03px;font-size:10.6px;line-height:10.6px;color:#000;font-weight:normal;">00:00:00</div>
<div class="b" style="left:469px;top:571px;width:16px;height:15px;background:#e6e6e6;box-sizing:border-box;border:1px solid #c0c0c0"></div>
<div class="b" style="left:470px;top:578px;width:14px;height:1px;background:#bdbdbd"></div>
<svg class="b" style="left:473px;top:573px;" width="8" height="12" viewBox="0 0 8 12"><path d="M0.5 3.5 L4 0.5 L7.5 3.5Z M0.5 8.5 L4 11.5 L7.5 8.5Z" fill="#222"/></svg>
<div class="t " style="left:350.5px;top:606.63px;font-size:10.6px;line-height:10.6px;color:#000;font-weight:normal;">Starting On:</div>
<div class="b" style="left:416px;top:602.5px;width:199px;height:19px;background:#fff;box-sizing:border-box;border:1px solid #7a7a7a"></div>
<div class="t " style="left:417.8px;top:607.03px;font-size:10.6px;line-height:10.6px;color:#000;font-weight:normal;">Wednesday,</div>
<div class="t " style="left:496.2px;top:607.03px;font-size:10.6px;line-height:10.6px;color:#000;font-weight:normal;">May</div>
<div class="t " style="left:535px;top:607.03px;font-size:10.6px;line-height:10.6px;color:#000;font-weight:normal;">12, 2021</div>
<svg class="b" style="left:588px;top:606.5px;" width="11" height="12" viewBox="0 0 11 12"><rect x="0.5" y="0.5" width="9" height="10" fill="#f4f4f4" stroke="#7a8290"/><path d="M2 3 H8 M2 5 H8 M2 7 H8 M4 2 V9 M6 2 V9" stroke="#7a8290" stroke-width="0.6"/></svg>
<svg class="b" style="left:601px;top:609.5px;" width="7" height="4" viewBox="0 0 7 4"><path d="M0 0 H7 L3.5 4Z" fill="#3a6ab0"/></svg>
<div class="t " style="left:362.6px;top:636.73px;font-size:10.6px;line-height:10.6px;color:#000;font-weight:normal;">Running Until:</div>
<svg class="b" style="left:438px;top:634px;" width="15" height="15" viewBox="0 0 15 15"><circle cx="7.5" cy="7.5" r="6.3" fill="#fff" stroke="#333" stroke-width="1"/><circle cx="7.5" cy="7.5" r="3.6" fill="#333"/></svg>
<div class="t " style="left:458.3px;top:636.73px;font-size:10.6px;line-height:10.6px;color:#000;font-weight:normal;">Indefinitely</div>
<svg class="b" style="left:438px;top:657.5px;" width="15" height="15" viewBox="0 0 15 15"><circle cx="7.5" cy="7.5" r="6.3" fill="#fff" stroke="#333" stroke-width="1"/></svg>
<div class="t " style="left:458.3px;top:660.53px;font-size:10.6px;line-height:10.6px;color:#000;font-weight:normal;">End Date:</div>
<div class="b" style="left:518px;top:656.5px;width:200px;height:19px;background:#f0f0f0;box-sizing:border-box;border:1px solid #cccccc"></div>
<div class="t " style="left:519.8px;top:661.03px;font-size:10.6px;line-height:10.6px;color:#6d6d6d;font-weight:normal;">Wednesday,</div>
<div class="t " style="left:598.2px;top:661.03px;font-size:10.6px;line-height:10.6px;color:#6d6d6d;font-weight:normal;">May</div>
<div class="t " style="left:637px;top:661.03px;font-size:10.6px;line-height:10.6px;color:#6d6d6d;font-weight:normal;">12, 2021</div>
<svg class="b" style="left:691px;top:660.5px;" width="11" height="12" viewBox="0 0 11 12"><rect x="0.5" y="0.5" width="9" height="10" fill="#f4f4f4" stroke="#b8b8b8"/><path d="M2 3 H8 M2 5 H8 M2 7 H8 M4 2 V9 M6 2 V9" stroke="#b8b8b8" stroke-width="0.6"/></svg>
<svg class="b" style="left:704px;top:663.5px;" width="7" height="4" viewBox="0 0 7 4"><path d="M0 0 H7 L3.5 4Z" fill="#bbb"/></svg>
<div class="b" style="left:648px;top:854px;width:73px;height:21px;background:#e1e1e1;box-sizing:border-box;border:2px solid #0078d7"></div>
<div class="t " style="left:675px;top:860.03px;font-size:10.6px;line-height:10.6px;color:#000;font-weight:normal;">OK</div>
<div class="b" style="left:738px;top:854px;width:73px;height:21px;background:#e1e1e1;box-sizing:border-box;border:1px solid #adadad"></div>
<div class="t " style="left:755.5px;top:860.03px;font-size:10.6px;line-height:10.6px;color:#000;font-weight:normal;">Cancel</div>
<div class="b" style="left:0px;top:0px;width:1197px;height:2px;background:#7a7a7a"></div>
<div class="b" style="left:0px;top:0px;width:2px;height:915px;background:#7a7a7a"></div>
<div class="b" style="left:1194px;top:0px;width:3px;height:915px;background:#7a7a7a"></div>
<div class="b" style="left:0px;top:913px;width:1197px;height:2px;background:#7a7a7a"></div>
</body></html>
